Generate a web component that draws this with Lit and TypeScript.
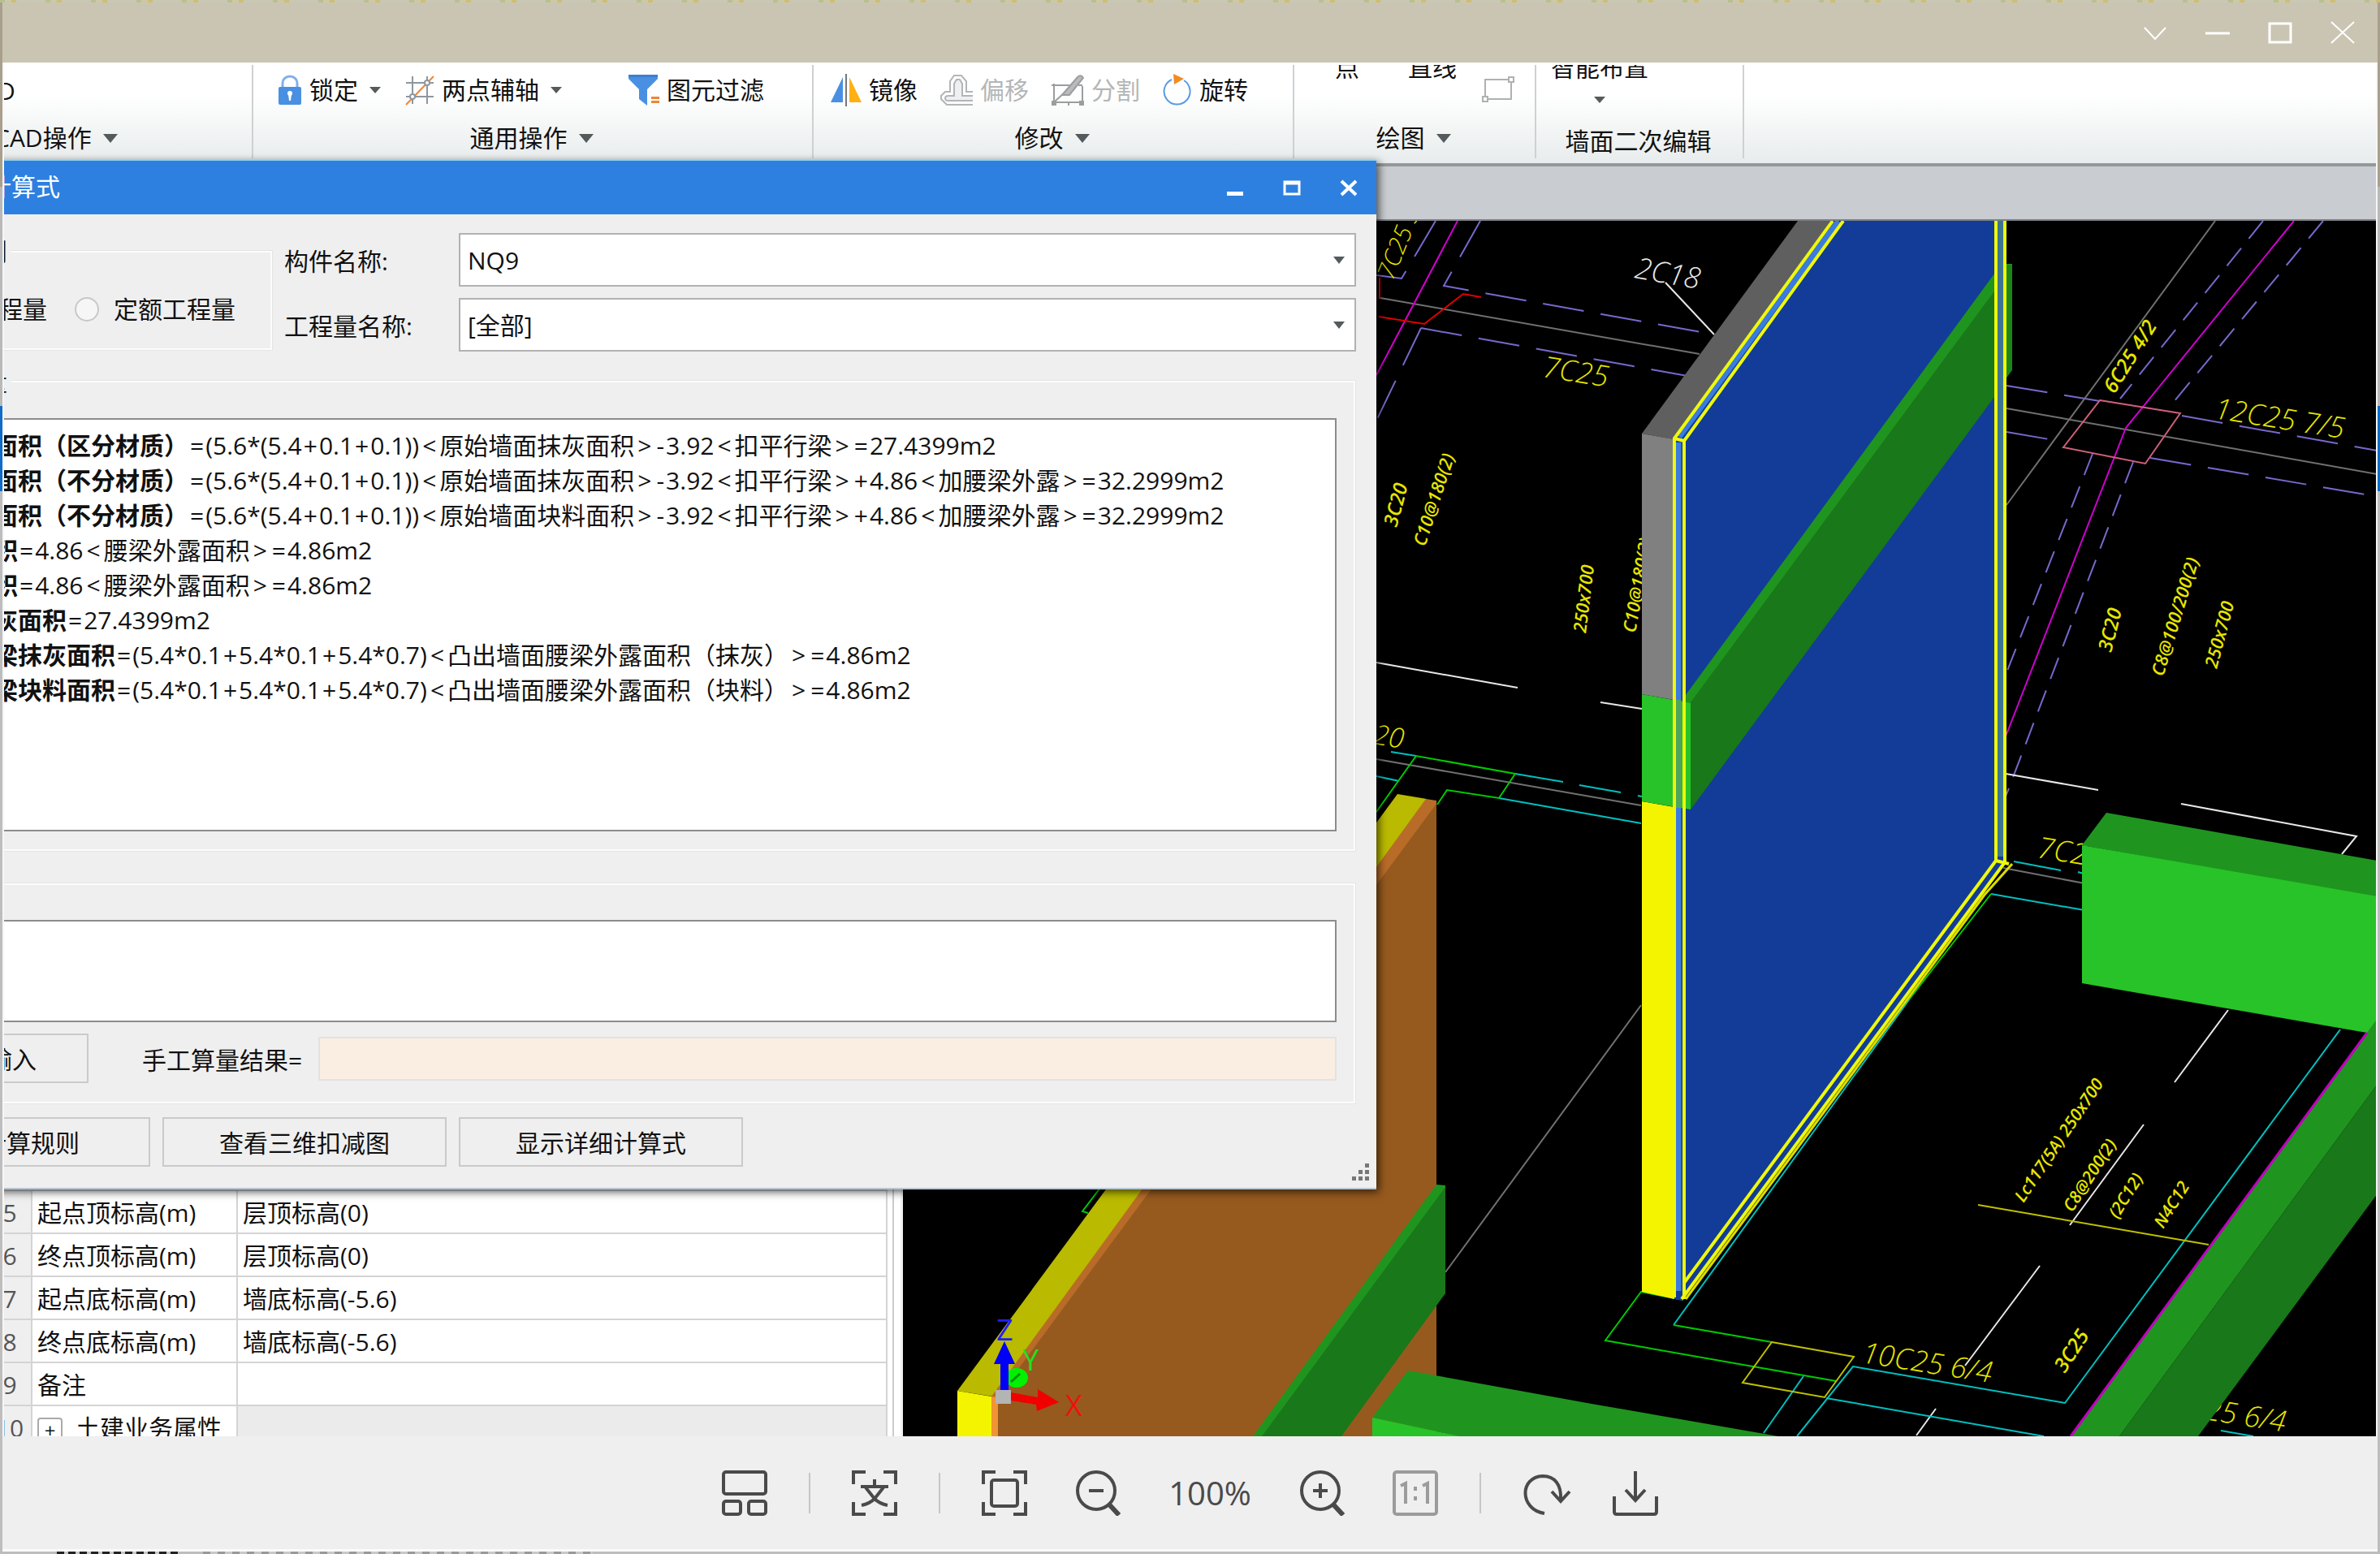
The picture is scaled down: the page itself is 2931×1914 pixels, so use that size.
import { LitElement, html, css, svg } from "lit";
import { customElement, property } from "lit/decorators.js";

const base = css`
  * { box-sizing: border-box; }
  button, select, input, textarea {
    font: inherit; color: inherit; margin: 0; padding: 0;
    border: 0; border-radius: 0; background: none; outline: none;
  }
  button { white-space: nowrap; }
  svg { display: block; flex: none; }
`;

const caret = (w: number, h: number) => html`
  <svg width=${w} height=${h} viewBox="0 0 10 6" preserveAspectRatio="none" aria-hidden="true">
    <path d="M0 0H10L5 6Z" fill="#555a5c" />
  </svg>`;

/* ---------- ribbon ---------- */

const ribbonIcons = {
  lock: html`<svg width="30" height="38" viewBox="0 0 30 38">
    <path d="M6 18V10a9 8 0 0 1 18 0v8" fill="none" stroke="#7fb0ea" stroke-width="3" />
    <rect x="1" y="15" width="28" height="22" rx="2" fill="#4a90e2" />
    <circle cx="15" cy="23" r="3" fill="#fff" /><path d="M13 24h4l-1 8h-2z" fill="#fff" />
  </svg>`,
  axis: html`<svg width="36" height="38" viewBox="0 0 36 38" fill="none">
    <path d="M9 2V36M27 2V36M1 10H35M1 27H35" stroke="#8d979e" stroke-width="2" />
    <path d="M1 37L35 2" stroke="#f08438" stroke-width="2" />
    <circle cx="27" cy="10" r="3" fill="#fff" stroke="#8d979e" stroke-width="2" />
    <circle cx="9" cy="27" r="3" fill="#fff" stroke="#8d979e" stroke-width="2" />
  </svg>`,
  filter: html`<svg width="38" height="40" viewBox="0 0 38 40">
    <path d="M0 1H36V6L23 19V39L13 31V19L0 6Z" fill="#4a90e2" />
    <path d="M0 1H36V4H0Z" fill="#3a7fd0" />
    <path d="M28 28H38V31H28ZM28 33H38V36H28Z" fill="#f08438" />
  </svg>`,
  mirror: html`<svg width="38" height="40" viewBox="0 0 38 40">
    <path d="M15 4V35H0Z" fill="#4a90e2" /><path d="M23 4V35H38Z" fill="#ffb013" />
    <path d="M19 0V40" stroke="#777" stroke-width="2" />
  </svg>`,
  offset: html`<svg width="40" height="40" viewBox="0 0 40 40" fill="none" stroke="#b3b5b6" stroke-width="2">
    <path d="M40 38H8L1 31V27L6 22H12V9L17 2H26L32 9V22H40" />
    <path d="M40 33H10Q6 33 6 30Q6 27 10 27H17V12L20 7H24L27 12V27H40" fill="#eef0f1" />
  </svg>`,
  split: html`<svg width="40" height="38" viewBox="0 0 40 38" fill="none" stroke="#9b9d9e" stroke-width="2">
    <path d="M0 13H22M3 11V35M0 34H40M38 14V37M21 34V38M33 13H38M4 33L16 22" />
    <path d="M0 33H5V37H0ZM35 33H40V37H35Z" fill="#9b9d9e" />
    <path d="M13 25L32 3Q36 -1 39 4L22 25Z" fill="#b9bbbc" />
  </svg>`,
  rotate: html`<svg width="36" height="40" viewBox="0 0 36 40" fill="none">
    <path d="M11 7A16 16 0 1 0 26 8" stroke="#5b9be6" stroke-width="2" />
    <path d="M13 0L26 6L14 13Z" fill="#f28b24" />
  </svg>`,
  rect: html`<svg width="40" height="32" viewBox="0 0 40 32" fill="#fff" stroke="#aeb1b3" stroke-width="2">
    <rect x="4" y="4" width="32" height="24" /><rect x="33" y="1" width="6" height="6" /><rect x="1" y="25" width="6" height="6" />
  </svg>`,
};

interface Tool { icon: keyof typeof ribbonIcons; text: string; menu?: boolean; off?: boolean; }

@customElement("ribbon-bar")
class RibbonBar extends LitElement {
  static styles = [base, css`
    :host {
      display: flex; height: 128px; overflow: hidden; border-top: 3px solid #fff; border-bottom: 4px solid #939899;
      background: linear-gradient(#fff 30%, #e8ecec);
    }
    .group { display: flex; flex-direction: column; justify-content: space-between; border-right: 2px solid #cdd1d3; padding: 9px 0 5px; margin-bottom: 6px; }
    .cad { width: 307px; }
    .common { width: 690px; }
    .modify { width: 592px; }
    .draw { width: 298px; }
    .wall { width: 256px; }
    .tools { display: flex; align-items: center; height: 44px; gap: 30px; padding-left: 30px; }
    .modify .tools { gap: 28px; padding-left: 21px; }
    .tool, .title { display: flex; align-items: center; gap: 9px; line-height: 40px; white-space: nowrap; }
    .tool > svg + span + svg { margin-left: 5px; }
    .apart { margin-left: 52px; }
    .off { color: #b4b6b7; }
    .title { justify-content: center; gap: 14px; padding-right: 3px; }
    .cad .title { justify-content: flex-start; margin-left: -12px; }
    .cad .tools { padding: 0; margin-left: -8px; }
    .cut { display: flex; align-items: flex-start; height: 48px; margin-top: -21px; line-height: 30px; }
    .draw .cut { gap: 60px; padding-left: 50px; }
    .draw .cut svg { margin: 26px 0 0 -29px; }
    .wall .cut { flex-direction: column; align-items: center; gap: 21px; width: 156px; }
    .wall .title { line-height: 32px; }
  `];

  tool = (t: Tool) => html`
    <button class="tool ${t.off ? "off" : ""} ${t.icon === "filter" ? "apart" : ""}" ?disabled=${t.off}>
      ${ribbonIcons[t.icon]}<span>${t.text}</span>${t.menu ? caret(14, 8) : ""}
    </button>`;

  render() {
    const common: Tool[] = [
      { icon: "lock", text: "锁定", menu: true },
      { icon: "axis", text: "两点辅轴", menu: true },
      { icon: "filter", text: "图元过滤" },
    ];
    const modify: Tool[] = [
      { icon: "mirror", text: "镜像" },
      { icon: "offset", text: "偏移", off: true },
      { icon: "split", text: "分割", off: true },
      { icon: "rotate", text: "旋转" },
    ];
    return html`
      <div class="group cad"><div class="tools"><button>D</button></div><button class="title">CAD操作 ${caret(18, 11)}</button></div>
      <div class="group common"><div class="tools">${common.map(this.tool)}</div><button class="title">通用操作 ${caret(18, 11)}</button></div>
      <div class="group modify"><div class="tools">${modify.map(this.tool)}</div><button class="title">修改 ${caret(18, 11)}</button></div>
      <div class="group draw">
        <div class="cut"><button>点</button><button>直线</button><button aria-label="矩形">${ribbonIcons.rect}</button></div>
        <button class="title">绘图 ${caret(18, 11)}</button>
      </div>
      <div class="group wall"><button class="cut">智能布置 ${caret(14, 8)}</button><span class="title">墙面二次编辑</span></div>`;
  }
}

/* ---------- property table ---------- */

@customElement("property-table")
class PropertyTable extends LitElement {
  static styles = [base, css`
    :host { display: flex; flex-direction: column; justify-content: flex-end; overflow: hidden; background: #fff; padding-right: 8px; border-right: 3px solid #f0f0f0; }
    .frame { border-right: 2px solid #ccc; padding-right: 6px; margin: 0 0 -15px -19px; }
    table { width: 100%; border-collapse: collapse; table-layout: fixed; line-height: 40px; }
    th, td { height: 53px; padding: 2px 0 0 6px; border: solid #d4d4d4; border-width: 2px 2px 0 0; text-align: left; font-weight: 400; white-space: nowrap; }
    .num { width: 53px; padding: 2px 0 0; text-align: center; color: #555; background: #efefef; }
    .name { width: 253px; }
    .group { background: #ebebeb; }
    .expand { display: inline-block; width: 31px; height: 31px; margin-right: 16px; border: 2px solid #aaa; border-radius: 4px; line-height: 24px; font-size: 24px; vertical-align: middle; }
  `];
  render() {
    const rows = [
      ["5", "起点顶标高(m)", "层顶标高(0)"],
      ["6", "终点顶标高(m)", "层顶标高(0)"],
      ["7", "起点底标高(m)", "墙底标高(-5.6)"],
      ["8", "终点底标高(m)", "墙底标高(-5.6)"],
      ["9", "备注", ""],
    ];
    return html`<div class="frame"><table>
      <colgroup><col class="num" /><col class="name" /><col /></colgroup>
      ${rows.map(([n, k, v]) => html`<tr><td class="num">${n}</td><th scope="row">${k}</th><td>${v}</td></tr>`)}
      <tr><td class="num">10</td><th scope="row"><button class="expand" aria-label="展开">+</button>土建业务属性</th><td class="group"></td></tr>
    </table></div>`;
  }
}

/* ---------- 3D model view ---------- */

type Note = [number, number, number, number, string, string?];

const notes: Note[] = [
  [2012, 342, 10, 36, "2C18", "#e8e8e8"],
  [1899, 464, 9, 36, "7C25"],
  [1715, 346, -68, 30, "7C25 3/2"],
  [1690, 916, 9, 34, "20"],
  [1720, 650, -75, 24, "3C20"],
  [1755, 674, -72, 22, "C10@180(2)"],
  [1953, 780, -83, 22, "250x700"],
  [2014, 780, -80, 22, "C10@180(2)"],
  [2604, 486, -58, 25, "6C25 4/2"],
  [2726, 515, 9, 36, "12C25 7/5"],
  [2600, 804, -76, 24, "3C20"],
  [2664, 834, -73, 22, "C8@100/200(2)"],
  [2730, 824, -75, 22, "250x700"],
  [2508, 1056, 9, 36, "7C2"],
  [2492, 1482, -56, 21, "Lc117(5A) 250x700"],
  [2552, 1494, -57, 21, "C8@200(2)"],
  [2608, 1502, -58, 21, "(2C12)"],
  [2664, 1514, -58, 21, "N4C12"],
  [2292, 1678, 9, 36, "10C25 6/4"],
  [2543, 1692, -57, 25, "3C25"],
  [2714, 1748, 9, 36, "25 6/4"],
];

const line = (color: string, ...paths: string[]) =>
  svg`<path d=${paths.join("")} stroke=${color} />`;
const face = (color: string, points: string) => svg`<polygon points=${points} fill=${color} />`;

@customElement("model-view")
class ModelView extends LitElement {
  static styles = css`
    :host { display: block; background: #000; overflow: hidden; }
    .scene { display: block; width: 100%; height: 100%; }
    .thin { fill: none; stroke-width: 2; }
    .dash { fill: none; stroke-width: 2; stroke-dasharray: 51 21; }
    .short { fill: none; stroke-width: 2; stroke-dasharray: 28 15; }
    .edge { fill: none; stroke: #eef80c; stroke-width: 4; }
    .note { font-family: "Open Sans", sans-serif; font-weight: 600; font-style: italic; }
    .note.big { font-weight: 300; }
    .axis { font: 30px "Open Sans", sans-serif; }
  `;
  note = ([x, y, angle, size, text, color = "#e6e600"]: Note) => svg`
    <text class="note ${size > 26 ? "big" : ""}" transform="translate(${x} ${y}) rotate(${angle})" font-size=${size} fill=${color}>${text}</text>`;

  render() {
    return html`<svg class="scene" viewBox="1112 272 1814 1497" preserveAspectRatio="xMinYMin slice" role="img" aria-label="三维模型">
      <g class="dash">
        ${line("#7868cc", "M1768 272L1726 343L1695 339", "M1823 272L1778 352L2111 412", "M1750 404L2078 463", "M1750 404L1695 518",
          "M2471 475L2586 494", "M2687 512L2928 555", "M2471 532L2541 544", "M2648 564L2919 610")}
      </g>
      <g class="short">
        ${line("#7868cc", "M2787 272L2611 491", "M2861 272L2672 501", "M2577 559L2470 831", "M2627 569L2470 981")}
      </g>
      <g class="thin">
        ${line("#707070", "M1700 367L2093 436", "M1695 935L2021 992", "M1780 1567L2021 1238", "M2728 272L2471 622", "M2471 503L2928 584", "M2467 1069L2567 1088")}
        ${line("#d000d0", "M1795 272L1695 462", "M2825 272L2618 527L2470 907")}
        ${line("#e00000", "M1699 342V368", "M1698 390L1754 399L1802 362L1824 366")}
        ${line("#e8e8e8", "M2051 348L2111 412", "M1695 816L1869 847", "M1971 865L2022 873", "M2470 953L2584 973", "M2686 990L2902 1030L2884 1052",
          "M2744 1244L2678 1333", "M2640 1385L2549 1509", "M2512 1559L2420 1682", "M2384 1735L2360 1768")}
        ${line("#00c0c0", "M1713 926L1744 931", "M1866 953L1925 963", "M1945 967L1996 976", "M2017 980L2022 981", "M1846 983L2021 1014", "M1695 956L1723 962",
          "M2480 1061L2538 1072", "M2559 1074L2570 1077", "M2452 1101L2567 1121", "M2352 1230L2061 1632", "M2882 1268L2543 1728L2282 1683L2213 1769",
          "M2221 1695L2172 1765", "M2249 1722L2517 1769", "M2735 1762L2775 1769")}
        ${line("#00cc00", "M1695 1000L1744 931L1866 953L1846 983L1782 973L1770 991", "M1355 1463L1333 1492L1340 1494", "M2452 1101L2352 1230",
          "M2061 1632L2182 1653", "M2073 1601L2021 1591L1977 1651L2261 1701")}
        ${line("#c0c000", "M2182 1653L2283 1671L2247 1721L2146 1703Z", "M2436 1484L2720 1533")}
        ${line("#d0607c", "M2586 493L2685 509L2642 571L2541 551Z")}
      </g>
      ${notes.map(this.note)}

      ${face("#baba00", "1179,1713 1721,978 1757,984 1223,1720")}
      ${face("#b86c28", "1221,1720 1756,984 1769,986 1769,1005 1229,1724")}
      ${face("#965a1e", "1229,1720 1769,990 1769,1769 1229,1769")}
      ${face("#f4f400", "1179,1713 1221,1720 1221,1769 1179,1769")}
      ${face("#f09434", "1221,1720 1229,1721 1229,1769 1221,1769")}
      ${face("#1f951f", "1543,1769 1769,1459 1780,1460 1780,1470 1560,1769")}
      ${face("#197819", "1554,1769 1780,1462 1780,1593 1652,1769")}
      ${face("#1f951f", "1690,1746 1734,1688 1960,1729 2190,1769 1796,1769")}
      ${face("#28c328", "1690,1746 1798,1769 1690,1769")}

      ${face("#5f5f5f", "2022,534 2214,272 2258,272 2060,541")}
      ${face("#808080", "2022,534 2061,541 2061,862 2022,855")}
      ${face("#123c98", "2062,541 2266,272 2468,272 2468,1062 2072,1602 2062,1600")}
      ${face("#f4f400", "2022,987 2062,994 2062,1600 2022,1591")}
      ${face("#1f951f", "2073,860 2465,325 2478,325 2478,345 2082,880")}
      ${face("#197819", "2082,865 2455,360 2470,345 2470,470 2082,997")}
      ${face("#1a861a", "2469,326 2478,326 2478,456 2469,468")}
      ${face("#28c328", "2022,855 2082,866 2082,997 2022,987")}
      <path d="M2067 545V1590M2264 272L2068 538" stroke="#3a7be0" stroke-width="7" fill="none" />
      <path d="M2067 862V995" stroke="#4ba85a" stroke-width="7" />
      <path d="M2464 272V1055" stroke="#3d7590" stroke-width="8" />
      <path class="edge" d="M2257 272L2062 540V1598M2270 272L2074 543V1600M2062 540L2074 543" />
      <path class="edge" d="M2458 272V1060L2074 1580M2469 272V1062L2071 1600M2458 1060L2474 1064" />
      <path d="M2478 1064L2444 1102L2076 1600" stroke="#dcdc00" stroke-width="3" fill="none" />

      ${face("#1f951f", "2564,1041 2594,1001 2928,1060 2928,1106")}
      ${face("#28c328", "2564,1041 2928,1104 2928,1275 2915,1272 2564,1211")}
      ${face("#1f951f", "2550,1769 2915,1272 2928,1254 2928,1335 2610,1769")}
      ${face("#197819", "2610,1769 2928,1335 2928,1470 2707,1769")}
      <path d="M2915 1272L2550 1769" stroke="#c000c0" stroke-width="3" />

      <path d="M1245 1715L1278 1721V1711L1304 1727L1277 1738L1276 1730L1245 1725Z" fill="#f00000" />
      <ellipse cx="1252" cy="1697" rx="14" ry="12" fill="#00f000" /><path d="M1245 1702L1256 1692" stroke="#009000" stroke-width="3" />
      <path d="M1237 1652L1250 1680H1242V1713H1232V1680H1224Z" fill="#0000f8" />
      <rect x="1226" y="1712" width="19" height="17" fill="#b4b4b4" />
      <g class="axis">
        <text x="1227" y="1651" font-size="36" fill="#2020ff">Z</text>
        <text x="1259" y="1688" font-size="36" fill="#20e020">Y</text>
        <text x="1312" y="1744" font-size="36" fill="#f01010">X</text>
      </g>
    </svg>`;
  }
}

/* ---------- formula dialog ---------- */

/* Operators get a little air on both sides, angle brackets more than signs. */
const formula = (text: string) =>
  text.split(/([<>+=-])/).map((part) =>
    /^[<>]$/.test(part) ? html`<span class="angle">${part}</span>`
      : /^[+=-]$/.test(part) ? html`<span class="sign">${part}</span>` : part);

@customElement("formula-dialog")
class FormulaDialog extends LitElement {
  static styles = [base, css`
    :host { display: block; background: #efefef; border-bottom: 2px solid #b8c6d2; box-shadow: 3px 3px 10px rgba(0, 0, 0, 0.65); }
    .head { display: flex; align-items: center; height: 67px; padding-right: 22px; background: #2d80e0; color: #fff; border-top: 1px solid #8fd0f0; }
    .head h1 { flex: 1; margin: 0; font-size: 30px; line-height: 40px; padding-bottom: 3px; font-weight: 400; margin-left: -1px; }
    .head .buttons { display: flex; gap: 46px; }
    .body { display: flex; flex-direction: column; padding: 23px 25px 26px 0; }
    fieldset { min-width: 0; margin: 0; padding: 0; border: 2px solid #fcfcfc; border-left: 0; box-shadow: 0 0 0 1px #e4e4e4; }
    legend { margin-left: -6px; padding: 0 5px 0 0; line-height: 30px; height: 30px; background: #efefef; }
    .top { display: flex; gap: 15px; }
    .kind { width: 350px; height: 136px; margin-top: 8px; }
    .radios { display: flex; align-items: center; gap: 34px; padding: 36px 0 0 13px; line-height: 40px; }
    .radios label { display: flex; align-items: center; gap: 18px; }
    .radios input { appearance: none; width: 30px; height: 30px; border: 2px solid #c8c8c8; border-radius: 50%; background: #f6f6f6; }
    .fields { flex: 1; display: grid; grid-template-columns: 215px 1fr; gap: 14px 0; align-items: center; }
    .pick { display: grid; align-items: center; }
    .pick > * { grid-area: 1 / 1; }
    .pick select { appearance: none; width: 100%; height: 66px; padding-left: 9px; border: 2px solid #b2b2b2; background: #fff; }
    .pick svg { justify-self: end; margin-right: 14px; pointer-events: none; }
    .detail { margin: 22px 1px 0 0; padding: 30px 21px 22px 0; }
    .log { min-height: 509px; padding: 10px 0 0 7px; border: 2px solid #8c8c8c; border-left: 0; background: #fff; line-height: 43px; white-space: nowrap; }
    .log p { margin: 0; }
    .angle { padding: 0 4px; }
    .sign { padding: 0 2px; }
    .manual { margin: 40px 1px 0 0; padding: 43px 21px 23px 0; }
    .manual textarea { display: block; width: 100%; height: 126px; border: 2px solid #8c8c8c; background: #fff; resize: none; }
    .result { display: flex; align-items: center; gap: 16px; margin-top: 14px; }
    .result label { width: 201px; white-space: nowrap; }
    .result input { flex: 1; min-width: 0; height: 54px; border: 2px solid #e2e2e2; background: #faeee3; }
    .button { height: 61px; padding-bottom: 2px; border: 2px solid #cacaca; text-align: center; }
    .enter { width: 124px; margin-right: 50px; padding-right: 62px; }
    .actions { display: flex; gap: 15px; margin-top: 17px; }
    .actions .button { width: 350px; }
    .actions .rules { width: 200px; padding-right: 85px; }
    .button span { display: flex; justify-content: flex-end; }
    .grip { position: absolute; right: 8px; bottom: 8px; }
  `];
  render() {
    const rows = [
      ["面积（区分材质）", "=(5.6*(5.4+0.1+0.1))<原始墙面抹灰面积>-3.92<扣平行梁>=27.4399m2"],
      ["面积（不分材质）", "=(5.6*(5.4+0.1+0.1))<原始墙面抹灰面积>-3.92<扣平行梁>+4.86<加腰梁外露>=32.2999m2"],
      ["面积（不分材质）", "=(5.6*(5.4+0.1+0.1))<原始墙面块料面积>-3.92<扣平行梁>+4.86<加腰梁外露>=32.2999m2"],
      ["积", "=4.86<腰梁外露面积>=4.86m2"],
      ["积", "=4.86<腰梁外露面积>=4.86m2"],
      ["灰面积", "=27.4399m2"],
      ["梁抹灰面积", "=(5.4*0.1+5.4*0.1+5.4*0.7)<凸出墙面腰梁外露面积（抹灰）>=4.86m2"],
      ["梁块料面积", "=(5.4*0.1+5.4*0.1+5.4*0.7)<凸出墙面腰梁外露面积（块料）>=4.86m2"],
    ];
    return html`
      <div class="head">
        <h1>计算式</h1>
        <div class="buttons">
          <button aria-label="最小化"><svg width="24" height="24" viewBox="0 0 24 24"><path d="M2 17H22V22H2Z" fill="#fff" /></svg></button>
          <button aria-label="最大化"><svg width="24" height="24" viewBox="0 0 24 24"><path d="M3 5H21V20H3ZM3 7H21" fill="none" stroke="#fff" stroke-width="3" /></svg></button>
          <button aria-label="关闭"><svg width="24" height="24" viewBox="0 0 24 24"><path d="M3 4L21 21M21 4L3 21" stroke="#fff" stroke-width="4" /></svg></button>
        </div>
      </div>
      <div class="body">
        <div class="top">
          <fieldset class="kind">
            <legend>别</legend>
            <div class="radios"><span>程量</span><label><input type="radio" name="kind" />定额工程量</label></div>
          </fieldset>
          <div class="fields">
            <label for="part">构件名称:</label>
            <div class="pick"><select id="part"><option>NQ9</option></select>${caret(14, 9)}</div>
            <label for="quantity">工程量名称:</label>
            <div class="pick"><select id="quantity"><option>[全部]</option></select>${caret(14, 9)}</div>
          </div>
        </div>
        <fieldset class="detail">
          <legend>量</legend>
          <div class="log" tabindex="0">${rows.map(([name, value]) => html`<p><b>${name}</b>${formula(value)}</p>`)}</div>
        </fieldset>
        <fieldset class="manual">
          <textarea aria-label="手工算量"></textarea>
          <div class="result">
            <button class="button enter"><span>输入</span></button>
            <label for="result">手工算量结果=</label>
            <input id="result" type="text" readonly />
          </div>
        </fieldset>
        <div class="actions">
          <button class="button rules"><span>计算规则</span></button>
          <button class="button">查看三维扣减图</button>
          <button class="button">显示详细计算式</button>
        </div>
      </div>
      <svg class="grip" width="22" height="22" viewBox="0 0 22 22" fill="#777">
        <path d="M16 0h5v5h-5zM8 8h5v5h-5zM16 8h5v5h-5zM0 16h5v5h-5zM8 16h5v5h-5zM16 16h5v5h-5z" />
      </svg>`;
  }
}

/* ---------- viewer toolbar ---------- */

@customElement("viewer-toolbar")
class ViewerToolbar extends LitElement {
  @property({ type: Number }) zoom = 100;
  static styles = [base, css`
    :host { display: flex; justify-content: center; align-items: center; gap: 51px; height: 142px; background: #efefef; border-bottom: 3px solid #fafafa; color: #4a4a4a; font-size: 40px; }
    .sep { width: 2px; height: 50px; background: #c4c6ca; }
    .zoom { display: flex; align-items: center; gap: 59px; }
    .faint { opacity: 0.5; }
    .level { line-height: 56px; }
    svg { fill: none; stroke: #4a4a4a; stroke-width: 4; }
  `];
  render() {
    return html`
      <button aria-label="缩略图"><svg width="56" height="56" viewBox="0 0 56 56">
        <rect x="2" y="2" width="52" height="27" rx="3" /><rect x="2" y="38" width="21" height="16" rx="3" /><rect x="33" y="38" width="21" height="16" rx="3" /></svg></button>
      <span class="sep"></span>
      <button aria-label="翻译"><svg width="56" height="56" viewBox="0 0 56 56">
        <path d="M2 17V2H17M39 2H54V17M54 39V54H39M17 54H2V39M28 11V19M11 20H45M17 21L28 35Q34 41 44 43M39 21L28 35Q22 41 12 43" /></svg></button>
      <span class="sep"></span>
      <div class="zoom">
        <button aria-label="适应窗口"><svg width="56" height="56" viewBox="0 0 56 56">
          <path d="M2 17V2H17M39 2H54V17M54 39V54H39M17 54H2V39" /><rect x="12" y="12" width="32" height="32" rx="3" /></svg></button>
        <button aria-label="缩小"><svg width="56" height="56" viewBox="0 0 56 56">
          <circle cx="26" cy="25" r="23" /><path d="M17 25H35" /><path d="M42 42L54 55" stroke-width="6" /></svg></button>
        <span class="level">${this.zoom}%</span>
        <button aria-label="放大"><svg width="56" height="56" viewBox="0 0 56 56">
          <circle cx="26" cy="25" r="23" /><path d="M17 25H35M26 16V34" /><path d="M42 42L54 55" stroke-width="6" /></svg></button>
        <button aria-label="原始大小" class="faint" disabled><svg width="56" height="56" viewBox="0 0 56 56">
          <rect x="2" y="2" width="52" height="52" rx="3" /><path d="M10 19L16 16V41M37 19L43 16V41M28 20V25M28 32V37" /></svg></button>
      </div>
      <span class="sep"></span>
      <button aria-label="旋转"><svg width="60" height="56" viewBox="0 0 60 56">
        <path d="M27 53C-4 48-4 8 25 7C40 7 48 18 47 36M36 26L47 38L58 26" /></svg></button>
      <button aria-label="下载"><svg width="56" height="56" viewBox="0 0 56 56">
        <path d="M28 1V36M16 24L28 37L40 24M2 32V51Q2 54 5 54H51Q54 54 54 51V32" /></svg></button>`;
  }
}

/* ---------- page ---------- */

@customElement("app-root")
class AppRoot extends LitElement {
  static styles = [base, css`
    :host { display: block; color: #111; font: 30px "Open Sans", "Noto Sans CJK SC", sans-serif; }
    .desktop {
      display: flex; flex-direction: column; height: 100vh; padding: 3px; overflow: hidden;
      background:
        repeating-linear-gradient(90deg, #b9c090 0 6px, #cdc9a4 6px 14px, #cfbd72 14px 20px, #c8c8b4 20px 56px) top / 100% 3px no-repeat,
        repeating-linear-gradient(90deg, #222 0 9px, #c8c8c8 9px 14px) 70px 100% / 150px 3px no-repeat,
        repeating-linear-gradient(90deg, #999 0 9px, #c8c8c8 9px 18px) 250px 100% / 480px 3px no-repeat,
        linear-gradient(#a8a08c 0 230px, #b9b9b9 230px 500px, #0f6cc8 500px 605px, #bdbdbd 605px);
    }
    .titlebar { display: flex; justify-content: flex-end; align-items: center; gap: 47px; height: 74px; padding-right: 28px; background: #cac5b2; flex: none; }
    .titlebar svg { fill: none; stroke: #fff; stroke-width: 2; }
    .image { flex: 1; min-height: 0; position: relative; display: flex; flex-direction: column; overflow: hidden; margin: 0 2px; }
    .viewer { flex: 1; min-height: 0; display: flex; flex-direction: column; background: #f6f6f6; }
    .strip { height: 67px; flex: none; background: #c9ccd1; border-bottom: 2px solid #7b8086; }
    .work { flex: 1; min-height: 0; display: flex; }
    .work property-table { flex: 0 0 37.9%; }
    .work model-view { flex: 1; min-width: 0; }
    formula-dialog { position: absolute; left: -20px; right: 1231px; top: 120px; }
  `];
  render() {
    return html`<div class="desktop">
      <header class="titlebar">
        <button aria-label="菜单"><svg width="30" height="30" viewBox="0 0 30 30"><path d="M2 9L15 23L28 9" /></svg></button>
        <button aria-label="最小化"><svg width="30" height="30" viewBox="0 0 30 30"><path d="M0 16H30" stroke-width="3" /></svg></button>
        <button aria-label="最大化"><svg width="30" height="30" viewBox="0 0 30 30"><path d="M2 4H28V27H2Z" stroke-width="3" /></svg></button>
        <button aria-label="关闭"><svg width="30" height="30" viewBox="0 0 30 30"><path d="M1 2L29 28M29 2L1 28" /></svg></button>
      </header>
      <main class="viewer">
        <div class="image">
          <ribbon-bar></ribbon-bar>
          <div class="strip"></div>
          <div class="work"><property-table></property-table><model-view></model-view></div>
          <formula-dialog></formula-dialog>
        </div>
        <viewer-toolbar></viewer-toolbar>
      </main>
    </div>`;
  }
}
